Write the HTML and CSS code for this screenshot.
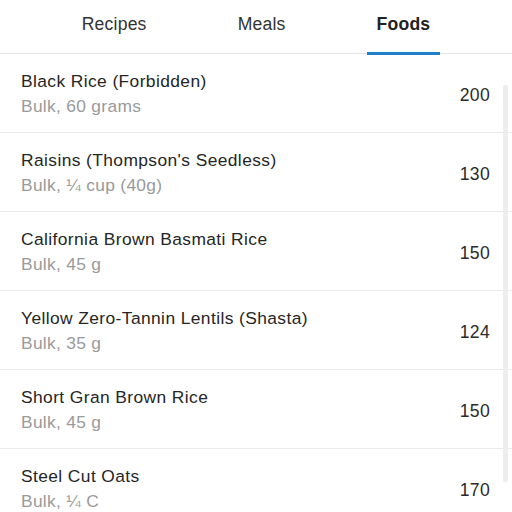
FILE: index.html
```html
<!DOCTYPE html>
<html>
<head>
<meta charset="utf-8">
<link rel="stylesheet" href="styles.css">
</head>
<body>
<div class="app">
  <nav class="tabs">
    <div class="tab">Recipes</div>
    <div class="tab">Meals</div>
    <div class="tab active">Foods</div>
  </nav>
  <div class="list">
    <div class="row">
      <div class="info"><div class="title">Black Rice (Forbidden)</div><div class="sub">Bulk, 60 grams</div></div>
      <div class="cal">200</div>
    </div>
    <div class="row">
      <div class="info"><div class="title">Raisins (Thompson's Seedless)</div><div class="sub">Bulk, ¼ cup (40g)</div></div>
      <div class="cal">130</div>
    </div>
    <div class="row">
      <div class="info"><div class="title">California Brown Basmati Rice</div><div class="sub">Bulk, 45 g</div></div>
      <div class="cal">150</div>
    </div>
    <div class="row">
      <div class="info"><div class="title">Yellow Zero-Tannin Lentils (Shasta)</div><div class="sub">Bulk, 35 g</div></div>
      <div class="cal">124</div>
    </div>
    <div class="row">
      <div class="info"><div class="title">Short Gran Brown Rice</div><div class="sub">Bulk, 45 g</div></div>
      <div class="cal">150</div>
    </div>
    <div class="row">
      <div class="info"><div class="title">Steel Cut Oats</div><div class="sub">Bulk, ¼ C</div></div>
      <div class="cal">170</div>
    </div>
    <div class="scrollbar"></div>
  </div>
</div>
</body>
</html>
```
FILE: styles.css
```css
html, body {
  margin: 0;
  padding: 0;
  background: #fff;
}
body {
  font-family: "Liberation Sans", Arial, sans-serif;
  color: #2b2b2b;
  width: 512px;
  height: 512px;
  overflow: hidden;
}
.tabs {
  display: flex;
  justify-content: center;
  gap: 71px;
  height: 53px;
  border-bottom: 1px solid #e4e4e4;
}
.tab {
  position: relative;
  padding: 0 10px;
  font-size: 17.6px;
  letter-spacing: 0.2px;
  line-height: 48px;
  color: #333;
}
.tab.active {
  font-weight: bold;
  color: #222;
}
.tab.active::after {
  content: "";
  position: absolute;
  left: 0;
  right: 0;
  bottom: -2px;
  height: 3px;
  background: #1f7fc8;
}
.list {
  position: relative;
}
.row {
  display: flex;
  align-items: center;
  justify-content: space-between;
  height: 78px;
  padding: 0 22px 0 21px;
  border-bottom: 1px solid #ebebeb;
  box-sizing: content-box;
}
.info {
  align-self: flex-start;
  padding-top: 16px;
}
.title {
  font-size: 17.4px;
  letter-spacing: 0.4px;
  line-height: 22px;
  color: #262626;
}
.sub {
  font-size: 17.4px;
  letter-spacing: 0.3px;
  line-height: 23px;
  margin-top: 3px;
  color: #9a9a9a;
}
.cal {
  font-size: 17.6px;
  letter-spacing: 0.3px;
  color: #2b2b2b;
  margin-top: 4px;
}
.scrollbar {
  position: absolute;
  left: 503px;
  top: 31px;
  width: 5px;
  height: 397px;
  border-radius: 3px;
  background: #ededed;
}
```
